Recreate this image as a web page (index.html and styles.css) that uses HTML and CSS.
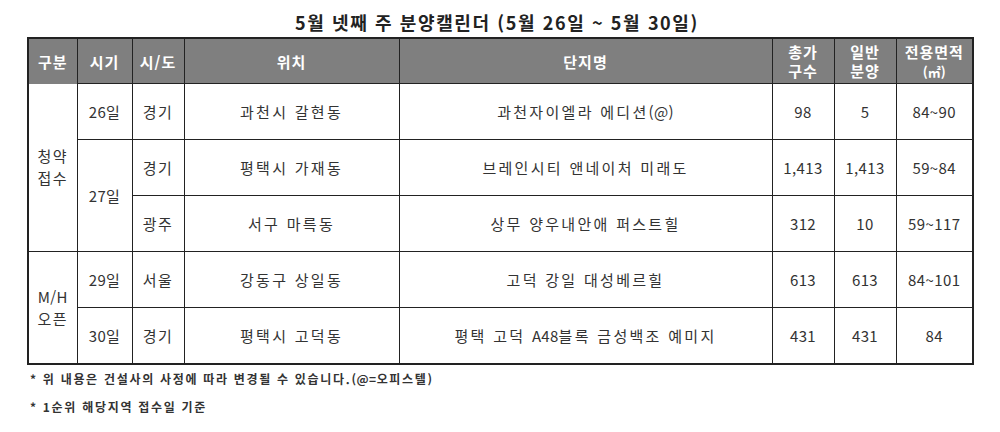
FILE: index.html
```html
<!DOCTYPE html>
<html lang="ko">
<head>
<meta charset="utf-8">
<link rel="stylesheet" href="styles.css">
</head>
<body>
<div class="page">
  <h1 class="title">5월 넷째 주 분양캘린더 (5월 26일 ~ 5월 30일)</h1>
  <table class="cal">
    <colgroup>
      <col class="c1"><col class="c2"><col class="c3"><col class="c4"><col class="c5"><col class="c6"><col class="c7"><col class="c8">
    </colgroup>
    <thead>
      <tr>
        <th class="first">구분</th>
        <th>시기</th>
        <th>시/도</th>
        <th>위치</th>
        <th>단지명</th>
        <th>총가<br>구수</th>
        <th>일반<br>분양</th>
        <th>전용면적<br><span class="unit">(㎡)</span></th>
      </tr>
    </thead>
    <tbody>
      <tr>
        <td rowspan="3" class="ko">청약<br>접수</td>
        <td class="num">26일</td>
        <td class="ko">경기</td>
        <td class="wide">과천시 갈현동</td>
        <td class="wide">과천자이엘라 에디션<span class="lat">(@)</span></td>
        <td class="num">98</td>
        <td class="num">5</td>
        <td class="num">84~90</td>
      </tr>
      <tr>
        <td rowspan="2" class="num">27일</td>
        <td class="ko">경기</td>
        <td class="wide">평택시 가재동</td>
        <td class="wide">브레인시티 앤네이처 미래도</td>
        <td class="num">1,413</td>
        <td class="num">1,413</td>
        <td class="num">59~84</td>
      </tr>
      <tr>
        <td class="ko">광주</td>
        <td class="wide">서구 마륵동</td>
        <td class="wide">상무 양우내안애 퍼스트힐</td>
        <td class="num">312</td>
        <td class="num">10</td>
        <td class="num">59~117</td>
      </tr>
      <tr>
        <td rowspan="2" class="ko"><span class="lat">M/H</span><br>오픈</td>
        <td class="num">29일</td>
        <td class="ko">서울</td>
        <td class="wide">강동구 상일동</td>
        <td class="wide">고덕 강일 대성베르힐</td>
        <td class="num">613</td>
        <td class="num">613</td>
        <td class="num">84~101</td>
      </tr>
      <tr>
        <td class="num">30일</td>
        <td class="ko">경기</td>
        <td class="wide">평택시 고덕동</td>
        <td class="wide">평택 고덕 <span class="lat">A48</span>블록 금성백조 예미지</td>
        <td class="num">431</td>
        <td class="num">431</td>
        <td class="num">84</td>
      </tr>
    </tbody>
  </table>
  <p class="note">* 위 내용은 건설사의 사정에 따라 변경될 수 있습니다.<span class="lat">(@=</span>오피스텔<span class="lat">)</span></p>
  <p class="note">* 1순위 해당지역 접수일 기준</p>
</div>
</body>
</html>
```

FILE: styles.css
```css
html, body {
  margin: 0;
  padding: 0;
  background: #ffffff;
}
body {
  font-family: "Noto Sans CJK KR", "Noto Sans", sans-serif;
  color: #333333;
}
.page {
  width: 1000px;
  height: 432px;
  padding: 8px 0 0 27px;
  box-sizing: border-box;
}
.title {
  margin: 0;
  width: 940px;
  text-align: center;
  font-size: 18px;
  line-height: 28px;
  font-weight: bold;
  color: #222222;
  letter-spacing: 1.6px;
}
.cal {
  margin-top: 1px;
  width: 945px;
  border-collapse: collapse;
  table-layout: fixed;
  border: 2px solid #222222;
}
.c1 { width: 49px; }
.c2 { width: 55px; }
.c3 { width: 52px; }
.c4 { width: 215px; }
.c5 { width: 373px; }
.c6 { width: 62px; }
.c7 { width: 62px; }
.c8 { width: 77px; }
.cal th, .cal td {
  border: 1.5px solid #222222;
  text-align: center;
  vertical-align: middle;
  padding: 0;
}
.cal th {
  background: #7f7f7f;
  color: #ffffff;
  font-weight: bold;
  font-size: 15px;
  line-height: 19px;
  height: 44px;
  letter-spacing: 1px;
}
.cal th.first {
  border-bottom-style: hidden;
}
.cal .unit {
  font-size: 13px;
  letter-spacing: 0;
}
.cal td {
  font-size: 15px;
  height: 55px;
  line-height: 22px;
  color: #333333;
}
.cal td.num {
  letter-spacing: 0.4px;
}
.cal td.ko {
  letter-spacing: 1.5px;
}
.cal td.wide {
  letter-spacing: 2.3px;
}
.lat {
  letter-spacing: 0.3px;
}
.note {
  margin: 0;
  padding-left: 3px;
  font-size: 12px;
  font-weight: bold;
  color: #333333;
  line-height: 14px;
  letter-spacing: 1.7px;
}
.note .lat {
  letter-spacing: 0.5px;
}
.note:first-of-type {
  margin-top: 7px;
}
.note + .note {
  margin-top: 14px;
}
```
